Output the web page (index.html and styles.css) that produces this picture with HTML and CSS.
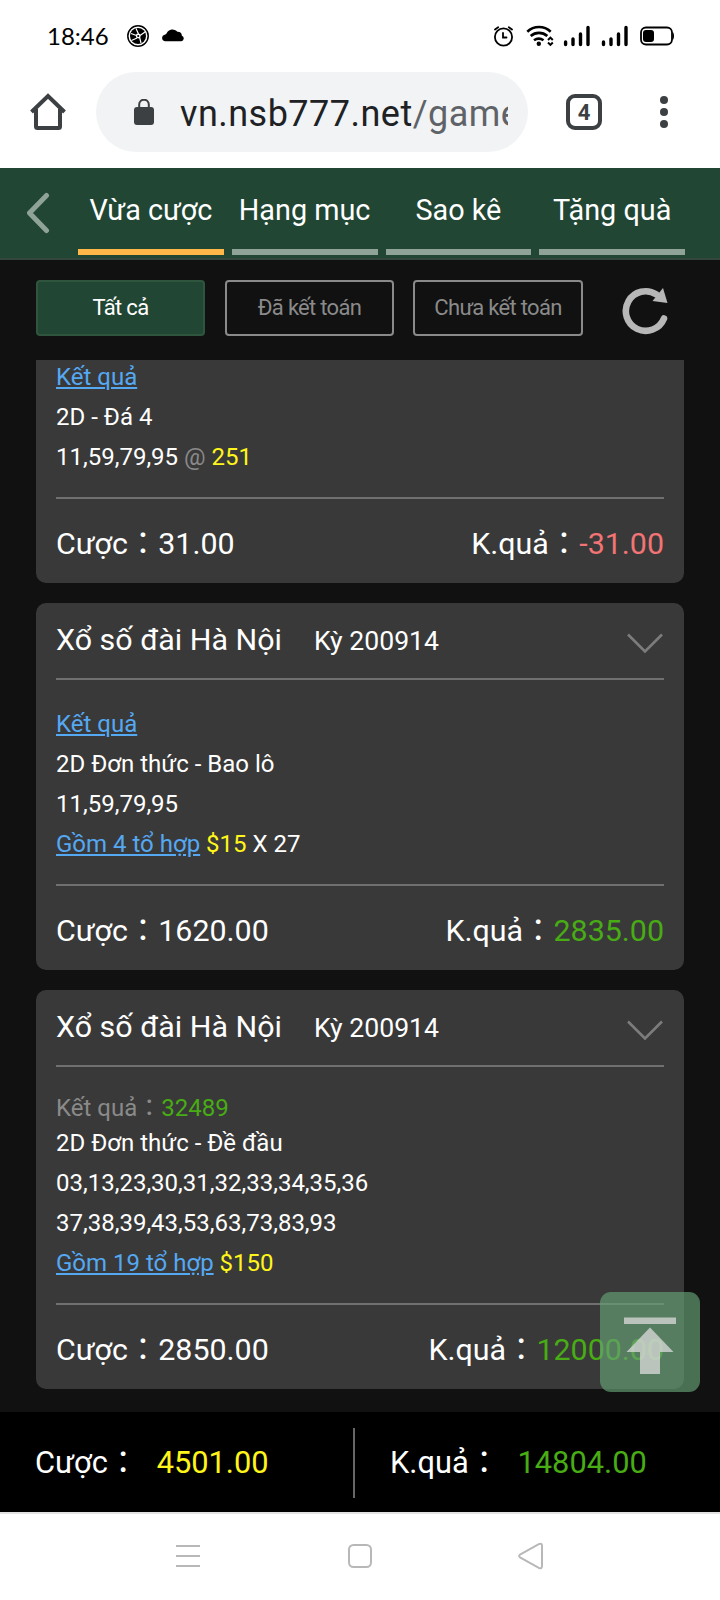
FILE: index.html
```html
<!DOCTYPE html>
<html lang="vi">
<head>
<meta charset="utf-8">
<title>Vừa cược</title>
<link rel="stylesheet" href="styles.css">
</head>
<body>
<div class="screen">
  <div class="status">
    <span class="clock">18:46</span>
    <svg class="status-left" width="60" height="24" viewBox="0 0 60 24">
      <circle cx="11" cy="12" r="10.200" fill="none" stroke="#000" stroke-width="1.500"/>
      <circle cx="11" cy="12" r="8" fill="#000"/>
      <path d="M11.500 10 9 4.500M13 11.500 18 8M12.500 13l1.500 6M10 14l-5.500 2.500M9.500 11.500 4 9.500" stroke="#fff" stroke-width="1.200"/>
      <circle cx="11.200" cy="12" r="2.400" fill="#fff"/><circle cx="11.200" cy="12" r="1.100" fill="#000"/>
      <path d="M38 17.200a3.300 3.300 0 0 1-.3-6.500q1.300-.4 2-1.500a6.300 6.300 0 0 1 10.700-1.400 4.300 4.300 0 0 1 4.500 4 2.800 2.800 0 0 1-.6 5.400z"/>
    </svg>
    <svg class="status-right" width="186" height="24" viewBox="490 24 186 24">
      <g fill="none" stroke="#000" stroke-width="1.800" stroke-linecap="round">
        <circle cx="503.500" cy="37" r="8.600"/>
        <path d="M503 33v4.500h3.500M495 29.500l3.200-2.300M512 29.500l-3.200-2.300"/>
      </g>
      <g fill="none" stroke="#000" stroke-width="2.600">
        <path d="M527.300 31.700a17 17 0 0 1 23.400 0M530.700 36a12.500 12.500 0 0 1 16.600 0M534 40.300a8 8 0 0 1 9.500 0"/>
      </g>
      <circle cx="538.800" cy="43.700" r="2.200"/>
      <path d="M548 40l2.400-2.400 2.400 2.400M548 42.500l2.400 2.400 2.400-2.400" fill="none" stroke="#000" stroke-width="2"/>
      <g stroke="#000" stroke-width="3.400" stroke-linecap="round">
        <path d="M565.600 42v2.500M573 39v5.500M580.500 34v10.500M588 27.500v17M603.500 42v2.500M611 39v5.500M618.500 34v10.500M626 27.500v17"/>
      </g>
      <rect x="641" y="27.500" width="31" height="17" rx="5" fill="none" stroke="#000" stroke-width="1.800"/>
      <rect x="643" y="30" width="11" height="12" rx="3"/>
      <path d="M672.500 32c2 1 2 7 0 8z"/>
    </svg>
  </div>

  <div class="browser">
    <svg class="home" width="36" height="38" viewBox="0 0 36 38" fill="none" stroke="#3c4043" stroke-width="4">
      <path d="M1.500 19 18 3l16.500 16M6 16v17.500a1.500 1.500 0 0 0 1.500 1.500h21a1.500 1.500 0 0 0 1.500-1.500V16"/>
    </svg>
    <div class="address">
      <svg width="20" height="26" viewBox="0 0 20 26">
        <rect x="0" y="8" width="20" height="18" rx="3" fill="#3c4043"/>
        <path d="M5.200 9V5.500a4.800 4.800 0 0 1 9.600 0V9" fill="none" stroke="#3c4043" stroke-width="2"/>
      </svg>
      <div class="url">vn.nsb777.net<span>/game</span></div>
    </div>
    <div class="tab-count">4</div>
    <div class="kebab"><i></i><i></i><i></i></div>
  </div>

  <div class="tabs">
    <svg class="back" width="24" height="42" viewBox="0 0 24 42"><path d="M20.500 3.500 3.500 21l17 17.500" fill="none" stroke="#90a399" stroke-width="5" stroke-linecap="round" stroke-linejoin="round"/></svg>
    <div class="tab active">Vừa cược</div>
    <div class="tab">Hạng mục</div>
    <div class="tab">Sao kê</div>
    <div class="tab">Tặng quà</div>
  </div>

  <div class="filters">
    <div class="filter on">Tất cả</div>
    <div class="filter">Đã kết toán</div>
    <div class="filter wide">Chưa kết toán</div>
    <svg class="refresh" width="46" height="48" viewBox="0 0 46 48">
      <path d="M42 31.500A19.800 19.800 0 1 1 34.500 7.500" fill="none" stroke="#b7b7b7" stroke-width="6.600" stroke-linecap="round"/>
      <path d="M41 1 45.500 16 30.500 14z" fill="#b7b7b7"/>
    </svg>
  </div>

  <div class="list">
    <div class="card cut">
      <div class="body">
        <p><a>Kết quả</a></p>
        <p>2D - Đá 4</p>
        <p>11,59,79,95 <span class="muted">@</span> <span class="gold">251</span></p>
      </div>
      <div class="sum"><span>Cược：31.00</span><span>K.quả：<b class="loss">-31.00</b></span></div>
    </div>

    <div class="card">
      <div class="head"><span class="game">Xổ số đài Hà Nội</span><span class="draw">Kỳ 200914</span>
        <svg width="38" height="20" viewBox="0 0 38 20"><path d="M2 1.500l17 17L36 1.500" fill="none" stroke="#7c7c7c" stroke-width="2.600"/></svg></div>
      <div class="body">
        <p><a>Kết quả</a></p>
        <p>2D Đơn thức - Bao lô</p>
        <p>11,59,79,95</p>
        <p><a>Gồm 4 tổ hợp</a> <span class="gold">$15</span> X 27</p>
      </div>
      <div class="sum"><span>Cược：1620.00</span><span>K.quả：<b class="win">2835.00</b></span></div>
    </div>

    <div class="card">
      <div class="head"><span class="game">Xổ số đài Hà Nội</span><span class="draw">Kỳ 200914</span>
        <svg width="38" height="20" viewBox="0 0 38 20"><path d="M2 1.500l17 17L36 1.500" fill="none" stroke="#7c7c7c" stroke-width="2.600"/></svg></div>
      <div class="body">
        <p class="result">Kết quả：<span class="win">32489</span></p>
        <p>2D Đơn thức - Đề đầu</p>
        <p>03,13,23,30,31,32,33,34,35,36</p>
        <p>37,38,39,43,53,63,73,83,93</p>
        <p><a>Gồm 19 tổ hợp</a> <span class="gold">$150</span></p>
      </div>
      <div class="sum"><span>Cược：2850.00</span><span>K.quả：<b class="win">12000.00</b></span></div>
    </div>
  </div>

  <div class="to-top">
    <svg width="100" height="100" viewBox="0 0 100 100" fill="#dcdcdc" fill-opacity=".75"><path d="M24 25.500h52V32H24zM50 35.500 73.500 60H60v22H40V60H26.500z"/></svg>
  </div>

  <div class="total">
    <div class="part"><span>Cược：</span><span class="gold">4501.00</span></div>
    <div class="part second"><span>K.quả：</span><span class="win">14804.00</span></div>
  </div>

  <div class="nav">
    <svg width="24" height="24" viewBox="0 0 24 24"><path d="M0 2h24M0 12h24M0 22h24" stroke="#b8b8b8" stroke-width="2"/></svg>
    <svg width="24" height="24" viewBox="0 0 24 24"><rect x="1" y="1" width="22" height="22" rx="4.500" fill="none" stroke="#b8b8b8" stroke-width="2"/></svg>
    <svg width="26" height="28" viewBox="0 0 26 28"><path d="M2 12.700 20.800 2.200Q24 .8 24 4v20q0 3.200-3.200 1.800L2 15.300Q.2 14 2 12.700z" fill="none" stroke="#b8b8b8" stroke-width="2"/></svg>
  </div>
</div>
</body>
</html>
```

FILE: styles.css
```css
* { box-sizing: border-box; }
body { margin: 0; background: #111; }
p { margin: 0; }
b { font-weight: 400; }
svg { display: block; flex: none; }

.screen {
  position: relative;
  width: 720px;
  height: 1600px;
  display: flex;
  flex-direction: column;
  overflow: hidden;
  background: #111;
  color: #fff;
  font-family: Roboto, "Noto Sans CJK TC", sans-serif;
}

.status {
  height: 72px;
  display: flex;
  align-items: center;
  padding: 0 44px 0 47px;
  background: #fff;
  color: #000;
}
.clock { width: 80px; font: 24px/72px Lato, sans-serif; }
.status-right { margin-left: auto; }

.browser {
  height: 96px;
  display: flex;
  align-items: center;
  padding: 0 48px 16px 30px;
  background: #fff;
}
.address {
  width: 432px;
  height: 80px;
  margin-left: 30px;
  padding: 0 20px 0 38px;
  display: flex;
  align-items: center;
  border-radius: 40px;
  background: #f1f3f4;
}
.url {
  margin-left: 26px;
  flex: 1;
  overflow: hidden;
  white-space: nowrap;
  font-size: 36px;
  letter-spacing: .48px;
  line-height: 80px;
  padding-top: 3px;
  color: #202124;
}
.url span { color: #5f6368; }
.tab-count {
  width: 36px;
  height: 36px;
  margin-left: 38px;
  border: 4px solid #3c4043;
  border-radius: 9px;
  color: #3c4043;
  text-align: center;
  font: 700 22px/30px Roboto, sans-serif;
}
.kebab { margin-left: auto; width: 16px; display: grid; justify-items: center; gap: 4px; }
.kebab i { width: 8px; height: 8px; border-radius: 50%; background: #3c4043; }

.tabs {
  height: 92px;
  display: flex;
  gap: 8px;
  padding: 0 35px 0 26px;
  background: #224634;
  border-bottom: 2px solid #35463e;
}
.back { margin: 24px 20px 0 0; }
.tab {
  flex: 1;
  height: 87px;
  border-bottom: 6px solid #90a399;
  text-align: center;
  font-size: 28.8px;
  line-height: 84px;
  white-space: nowrap;
}
.tab.active { border-color: #ffb848; }

.filters {
  height: 100px;
  display: flex;
  align-items: flex-start;
  padding: 20px 0 0 36px;
  gap: 20px;
}
.filter {
  width: 169px;
  height: 56px;
  border: 2px solid #8a8a8a;
  border-radius: 4px;
  color: #8a8a8a;
  text-align: center;
  font-size: 22px;
  line-height: 51px;
  letter-spacing: -.7px;
}
.filter.wide { width: 170px; margin-left: -1px; }
.filter.on { background: #224634; border-color: #30553f; color: #fff; }
.refresh { margin: 7px 0 0 19px; }

.list {
  height: 1052px;
  padding: 0 36px;
  display: flex;
  flex-direction: column;
  gap: 20px;
  overflow: hidden;
}
.card { border-radius: 10px; background: #393939; padding: 0 20px; flex: none; }
.card.cut { border-radius: 0 0 10px 10px; }
.cut .body { margin-top: -3px; padding-top: 0; }
.head {
  height: 77px;
  display: flex;
  align-items: baseline;
  border-bottom: 2px solid #707070;
  line-height: 74px;
}
.game { font-size: 30.4px; }
.draw { margin-left: 32px; font-size: 26.6px; }
.head svg { margin-left: auto; align-self: center; margin-top: 4px; }
.body {
  padding: 24px 0 20px;
  border-bottom: 2px solid #707070;
  font-size: 24px;
  line-height: 40px;
}
.body a { color: #55a8f2; text-decoration: underline; }
.result { color: #8a8a8a; height: 32px; line-height: 34px; }
.sum {
  height: 84px;
  display: flex;
  justify-content: space-between;
  font-size: 30.4px;
  line-height: 90px;
}
.muted { color: #8a8a8a; }
.gold { color: #fff51a; }
.win { color: #48ac14; }
.loss { color: #f27474; }

/* floats over the end of the last card */
.to-top {
  position: absolute;
  left: 600px;
  top: 1292px;
  width: 100px;
  height: 100px;
  border-radius: 11px;
  background: rgba(102, 160, 115, .67);
}

.total { height: 100px; display: flex; background: #000; font-size: 30.8px; line-height: 102px; }
.part { display: flex; gap: 18px; width: 353px; padding-left: 35px; }
.part.second {
  height: 70px;
  margin-top: 16px;
  border-left: 2px solid #666;
  padding-left: 35px;
  line-height: 70px;
}

.nav {
  height: 88px;
  display: flex;
  align-items: center;
  justify-content: space-between;
  padding: 0 176px 2px;
  border-top: 2px solid #e2e2e2;
  background: #fff;
}
.nav svg:nth-child(2) { margin-left: 2px; }
```
